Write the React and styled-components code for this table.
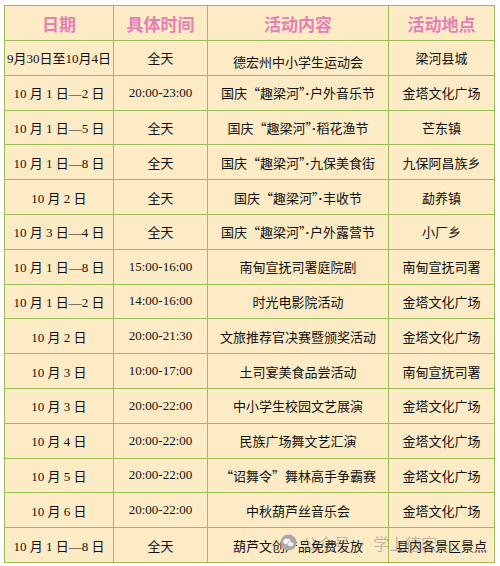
import React from 'react';
import styled, { createGlobalStyle } from 'styled-components';

const GlobalStyle = createGlobalStyle`
    html, body {
        margin: 0;
        padding: 0;
        background: #ffffff;
    }
`;

const rows = [
    ['9月30日至10月4日', '全天', '德宏州中小学生运动会', '梁河县城'],
    ['10 月 1 日—2 日', '20:00-23:00', '国庆“趣梁河”·户外音乐节', '金塔文化广场'],
    ['10 月 1 日—5 日', '全天', '国庆“趣梁河”·稻花渔节', '芒东镇'],
    ['10 月 1 日—8 日', '全天', '国庆“趣梁河”·九保美食街', '九保阿昌族乡'],
    ['10 月 2 日', '全天', '国庆“趣梁河”·丰收节', '勐养镇'],
    ['10 月 3 日—4 日', '全天', '国庆“趣梁河”·户外露营节', '小厂乡'],
    ['10 月 1 日—8 日', '15:00-16:00', '南甸宣抚司署庭院剧', '南甸宣抚司署'],
    ['10 月 1 日—2 日', '14:00-16:00', '时光电影院活动', '金塔文化广场'],
    ['10 月 2 日', '20:00-21:30', '文旅推荐官决赛暨颁奖活动', '金塔文化广场'],
    ['10 月 3 日', '10:00-17:00', '土司宴美食品尝活动', '南甸宣抚司署'],
    ['10 月 3 日', '20:00-22:00', '中小学生校园文艺展演', '金塔文化广场'],
    ['10 月 4 日', '20:00-22:00', '民族广场舞文艺汇演', '金塔文化广场'],
    ['10 月 5 日', '20:00-22:00', '“诏舞令”舞林高手争霸赛', '金塔文化广场'],
    ['10 月 6 日', '20:00-22:00', '中秋葫芦丝音乐会', '金塔文化广场'],
    ['10 月 1 日—8 日', '全天', '葫芦文创产品免费发放', '县内各景区景点'],
];

// narrow the middle dot the way the source image renders it
const renderActivity = (text) => {
    const parts = text.split('·');
    if (parts.length < 2) return text;
    return (
        <>
            {parts[0]}<Dot>·</Dot>{parts[1]}
        </>
    );
};

const App = () => {
    return (
        <>
            <GlobalStyle />
            <Page>
                <Wrap>
                    <Table>
                        <colgroup>
                            <col style={{ width: 109 }} />
                            <col style={{ width: 94 }} />
                            <col style={{ width: 181 }} />
                            <col style={{ width: 106 }} />
                        </colgroup>
                        <thead>
                            <tr>
                                <Head>日期</Head>
                                <Head>具体时间</Head>
                                <Head>活动内容</Head>
                                <Head>活动地点</Head>
                            </tr>
                        </thead>
                        <tbody>
                            {rows.map((r, i) => (
                                <tr key={i}>
                                    <Cell serif>{r[0]}</Cell>
                                    <Cell serif={r[1] !== '全天'}>{r[1]}</Cell>
                                    <Cell low={i === 0}>{renderActivity(r[2])}</Cell>
                                    <Cell>{r[3]}</Cell>
                                </tr>
                            ))}
                        </tbody>
                    </Table>
                    <Watermark>
                        <svg viewBox="0 0 20 20" width="17" height="17">
                            <circle cx="10" cy="10" r="9.5" fill="#a8a8a8" />
                            <ellipse cx="8.2" cy="8.8" rx="4.3" ry="3.4" fill="#f4f4f4" />
                            <ellipse cx="12.4" cy="11.8" rx="3.6" ry="2.8" fill="#f4f4f4" stroke="#a8a8a8" strokeWidth="0.7" />
                        </svg>
                        <span>公众号 · 学上德宏</span>
                    </Watermark>
                </Wrap>
            </Page>
        </>
    );
};

const Page = styled.div`
    width: 500px;
    height: 566px;
    padding: 5px 0 0 4px;
    box-sizing: border-box;
`;

const Wrap = styled.div`
    position: relative;
    width: 490px;
`;

const Table = styled.table`
    width: 490px;
    border-collapse: collapse;
    table-layout: fixed;
    background-color: #fdebc5;
    border: 1.5px solid #9bbb59;
`;

const Head = styled.th`
    height: 34px;
    padding: 0;
    border: 1.5px solid #9bbb59;
    color: #e480b6;
    font-family: "Noto Sans CJK SC", sans-serif;
    font-size: 17px;
    font-weight: 700;
    text-align: center;
    vertical-align: middle;
`;

const Cell = styled.td`
    height: 34.8px;
    padding: ${(p) => (p.low ? '8px 0 0' : '0')};
    border: 1.5px solid #9bbb59;
    color: #111111;
    font-family: ${(p) => (p.serif
        ? '"Liberation Serif", "Noto Sans CJK SC", serif'
        : '"Noto Sans CJK SC", sans-serif')};
    font-size: 13px;
    text-align: center;
    vertical-align: middle;
    white-space: nowrap;
    box-sizing: border-box;
`;

const Dot = styled.span`
    font-family: "Liberation Sans", sans-serif;
    font-weight: 700;
`;

const Watermark = styled.div`
    position: absolute;
    left: 276px;
    bottom: 8px;
    display: flex;
    align-items: center;
    gap: 5px;
    white-space: nowrap;
    color: rgba(110, 110, 110, 0.45);
    font-family: "Noto Sans CJK SC", sans-serif;
    font-size: 16px;
    pointer-events: none;
`;

export default App;
